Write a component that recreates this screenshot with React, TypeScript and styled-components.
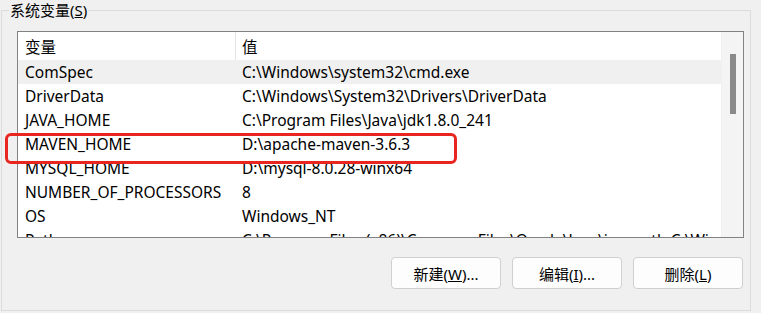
import React from "react";
import styled, { createGlobalStyle } from "styled-components";

const GlobalStyle = createGlobalStyle`
  body {
    margin: 0;
    background-color: #f0f0f0;
    font-family: "Noto Sans", "Noto Sans CJK SC", sans-serif;
    color: #000;
  }
`;

interface VarRow {
  name: string;
  value: string;
}

const rows: VarRow[] = [
  { name: "ComSpec", value: "C:\\Windows\\system32\\cmd.exe" },
  { name: "DriverData", value: "C:\\Windows\\System32\\Drivers\\DriverData" },
  { name: "JAVA_HOME", value: "C:\\Program Files\\Java\\jdk1.8.0_241" },
  { name: "MAVEN_HOME", value: "D:\\apache-maven-3.6.3" },
  { name: "MYSQL_HOME", value: "D:\\mysql-8.0.28-winx64" },
  { name: "NUMBER_OF_PROCESSORS", value: "8" },
  { name: "OS", value: "Windows_NT" },
  {
    name: "Path",
    value:
      "C:\\Program Files (x86)\\Common Files\\Oracle\\Java\\javapath;C:\\Windows\\system32",
  },
];

const App = () => {
  return (
    <>
      <GlobalStyle />
      <StPage>
        <StGroup>
          <StLegend>
            系统变量(<u>S</u>)
          </StLegend>
          <StListBox>
            <StTable>
              <StHeader>
                <StNameCell>变量</StNameCell>
                <StValueCell $divider>值</StValueCell>
              </StHeader>
              {rows.map((row, i) => (
                <StRow key={row.name} $selected={i === 0}>
                  <StNameCell>{row.name}</StNameCell>
                  <StValueCell>{row.value}</StValueCell>
                </StRow>
              ))}
            </StTable>
            <StScrollTrack>
              <StScrollThumb />
            </StScrollTrack>
          </StListBox>
          <StButtonRow>
            <StButton>
              新建(<u>W</u>)...
            </StButton>
            <StButton>
              编辑(<u>I</u>)...
            </StButton>
            <StButton>
              删除(<u>L</u>)
            </StButton>
          </StButtonRow>
          <StMark />
        </StGroup>
      </StPage>
    </>
  );
};

export default App;

const StPage = styled.div`
  width: 761px;
  height: 313px;
  padding: 0 0 0 1px;
  box-sizing: border-box;
  overflow: hidden;
`;

const StGroup = styled.fieldset`
  position: relative;
  width: 750px;
  min-width: 0;
  height: 311px;
  margin: 0;
  padding: 11px 6px 0 15px;
  box-sizing: border-box;
  border: 1px solid #dcdcdc;
  border-radius: 0;
`;

const StLegend = styled.legend`
  margin-left: -8px;
  padding: 0 1px;
  font-size: 15px;
  line-height: 20px;
  height: 20px;
`;

const StListBox = styled.div`
  display: flex;
  height: 207px;
  border: 1px solid #828282;
  background-color: #fff;
  box-sizing: border-box;
  overflow: hidden;
`;

const StTable = styled.div`
  flex: 1;
  min-width: 0;
  overflow: hidden;
`;

const StHeader = styled.div`
  display: flex;
  height: 28px;
  align-items: center;
  font-size: 15.5px;
`;

const StRow = styled.div<{ $selected?: boolean }>`
  display: flex;
  height: 24px;
  align-items: center;
  font-size: 15.5px;
  white-space: nowrap;
  background-color: ${(p) => (p.$selected ? "#f0f0f0" : "#fff")};
`;

const StNameCell = styled.div`
  width: 217px;
  flex-shrink: 0;
  padding-left: 7px;
  box-sizing: border-box;
`;

const StValueCell = styled.div<{ $divider?: boolean }>`
  flex: 1;
  min-width: 0;
  padding-left: 6px;
  align-self: stretch;
  display: flex;
  align-items: center;
  white-space: nowrap;
  overflow: hidden;
  border-left: 1px solid ${(p) => (p.$divider ? "#e5e5e5" : "transparent")};
`;

const StScrollTrack = styled.div`
  width: 22px;
  flex-shrink: 0;
  background-color: #f4f4f4;
  border-left: 1px solid #f0f0f0;
  padding-top: 22px;
  box-sizing: border-box;
  display: flex;
  justify-content: center;
`;

const StScrollThumb = styled.div`
  width: 6px;
  height: 60px;
  background-color: #8a8a8a;
`;

const StButtonRow = styled.div`
  display: flex;
  justify-content: flex-end;
  gap: 11px;
  margin-top: 19px;
  padding-right: 1px;
`;

const StButton = styled.button`
  width: 110px;
  height: 32px;
  font-family: "Noto Sans", "Noto Sans CJK SC", sans-serif;
  font-size: 15px;
  color: #000;
  background-color: #fdfdfd;
  border: 1px solid #d0d0d0;
  border-radius: 4px;
  padding: 0;
  cursor: pointer;
`;

// red annotation drawn over the MAVEN_HOME row
const StMark = styled.div`
  position: absolute;
  left: 3px;
  top: 113px;
  width: 452px;
  height: 31px;
  border: 3px solid #e8261f;
  border-radius: 6px;
  box-sizing: border-box;
  pointer-events: none;
`;
